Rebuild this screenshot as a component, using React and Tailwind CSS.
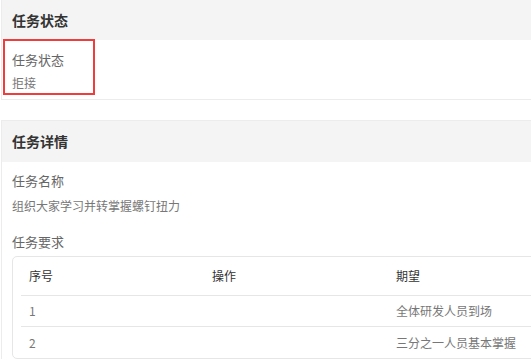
import React from 'react';

const rows = [
  { no: '1', op: '', expect: '全体研发人员到场' },
  { no: '2', op: '', expect: '三分之一人员基本掌握' },
];

const Card = ({ title, className = '', headerH = 'h-[40px]', children }) => (
  <div className={`ml-px w-[800px] border-l border-[#ececec] ${className}`}>
    <div className={`flex ${headerH} items-center bg-[#f4f4f4] pl-[10px] text-[14px] font-bold text-[#333]`}>
      {title}
    </div>
    {children}
  </div>
);

export default function App() {
  return (
    <div
      className="h-[362px] w-[531px] overflow-hidden bg-white"
      style={{ fontFamily: '"Noto Sans CJK SC", "Noto Sans", sans-serif' }}
    >
      <Card title="任务状态" className="border-b">
        <div className="h-[60px]">
          <div className="-mt-px ml-px h-[56px] w-[92px] border-2 border-[#f03c3c] pl-[7px] pt-[9px]">
            <div className="text-[13px] leading-[20px] text-[#666]">任务状态</div>
            <div className="mt-[3px] text-[12px] leading-[20px] text-[#777]">拒接</div>
          </div>
        </div>
      </Card>

      <Card title="任务详情" className="mt-[20px] border-t" headerH="h-[41px]">
        <div className="pl-[10px] pt-[9px]">
          <div className="text-[13px] leading-[20px] text-[#666]">任务名称</div>
          <div className="mt-[5px] text-[12px] leading-[20px] text-[#777]">组织大家学习并转掌握螺钉扭力</div>
          <div className="mt-[16px] text-[13px] leading-[20px] text-[#666]">任务要求</div>
          <div className="mt-[4px] w-[780px] rounded-[5px] border border-[#e6e6e6] px-[8px]">
            <div className="grid h-[39px] grid-cols-[183px_184px_184px_184px] items-center border-b border-[#e6e6e6] text-[12px] text-[#333]">
              <div className="pl-[8px]">序号</div>
              <div className="pl-[8px]">操作</div>
              <div className="pl-[8px]">期望</div>
              <div className="pl-[8px]"></div>
            </div>
            {rows.map((r, i) => (
              <div
                key={r.no}
                className={`grid h-[31px] grid-cols-[183px_184px_184px_184px] items-center text-[12px] text-[#777] ${
                  i < rows.length - 1 ? 'border-b border-[#e6e6e6]' : ''
                }`}
              >
                <div className="pl-[8px]">{r.no}</div>
                <div className="pl-[8px]">{r.op}</div>
                <div className="pl-[8px]">{r.expect}</div>
                <div className="pl-[8px]"></div>
              </div>
            ))}
          </div>
        </div>
      </Card>
    </div>
  );
}
